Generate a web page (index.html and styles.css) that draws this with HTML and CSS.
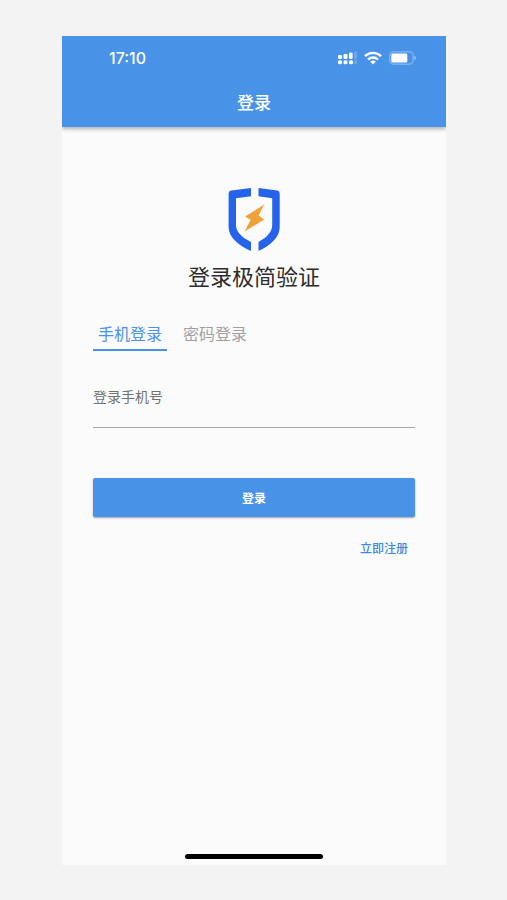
FILE: index.html
```html
<!DOCTYPE html>
<html lang="zh-CN">
<head>
  <meta charset="utf-8">
  <meta name="viewport" content="width=device-width, initial-scale=1">
  <title>登录</title>
  <link rel="stylesheet" href="styles.css">
</head>
<body>
  <div class="phone">
    <header class="app-bar">
      <div class="status">
        <span class="status-time">17:10</span>
        <div class="status-icons">
          <svg width="20" height="14" viewBox="0 0 20 14" fill="#fff" aria-hidden="true">
            <rect x="1" y="4" width="4" height="4" rx="1.200"/>
            <rect x="6.500" y="3" width="4" height="5" rx="1.200"/>
            <rect x="12" y="1.500" width="3.600" height="6.500" rx="1.200"/>
            <rect x="1" y="9.300" width="4" height="4" rx="1.500"/>
            <rect x="6.500" y="9.300" width="4" height="4" rx="1.500"/>
            <rect x="12" y="9.300" width="4" height="4" rx="1.500"/>
            <g opacity=".22">
              <rect x="17.200" y="0.500" width="2.600" height="7.500" rx="1.200"/>
              <rect x="17.200" y="9.300" width="2.600" height="4" rx="1.200"/>
            </g>
          </svg>
          <svg width="18" height="14" viewBox="0 0 18 14" fill="none" stroke="#fff" stroke-width="2.4" aria-hidden="true">
            <path d="M1 5.2C5.4 .8 12.6 .8 17 5.2"/>
            <path d="M4 8.5C6.8 5.8 11.2 5.8 14 8.5"/>
            <path d="M9 13.5 6.2 10.600Q9 8.400 11.800 10.600Z" fill="#fff" stroke="none"/>
          </svg>
          <svg width="28" height="14" viewBox="0 0 28 14" aria-hidden="true">
            <rect x=".7" y=".9" width="23.4" height="12.2" rx="3.6" fill="none" stroke="#fff" stroke-opacity=".35" stroke-width="1.2"/>
            <rect x="2.3" y="2.5" width="16" height="9" rx="1.500" fill="#fff"/>
            <path d="M25.3 4.8Q27.3 5.6 27.3 7T25.3 9.2Z" fill="#fff" opacity=".4"/>
          </svg>
        </div>
      </div>
      <h1 class="app-title">登录</h1>
    </header>

    <main class="content">
      <svg class="logo" width="52" height="64" viewBox="0 0 52 64" aria-hidden="true">
        <path d="M23 1 3 3.6Q.6 4 .6 6.4V40C.6 50 10 58 23 64V55C13 50 8 44.500 8 38V11.200L23 9.200Z" fill="#2563eb"/>
        <path d="M30.500 1 49.300 3.600Q51.700 4 51.700 6.400V40C51.700 50 43 58 30.500 64V55C39.500 50 44.200 44.500 44.200 38V11.200L30.500 9.200Z" fill="#2563eb"/>
        <path d="M36.200 17.500 17.200 29.400 22.600 33 16.600 44.600 36.400 32.400 30.600 28.400Z" fill="#f0a23a"/>
      </svg>
      <h2 class="product">登录极简验证</h2>

      <nav class="tabs" aria-label="登录方式">
        <button type="button" class="tab tab-active">手机登录</button>
        <button type="button" class="tab">密码登录</button>
      </nav>

      <form class="form">
        <input class="field" type="tel" placeholder="登录手机号" aria-label="登录手机号">
        <button type="submit" class="submit">登录</button>
        <a class="register" href="#">立即注册</a>
      </form>
    </main>

    <div class="home-bar"></div>
  </div>
</body>
</html>
```
FILE: styles.css
```css
* {
  box-sizing: border-box;
}

body {
  display: flex;
  min-height: 100vh;
  margin: 0;
  padding: 36px 61px 35px 62px;
  background: #f3f3f3;
  color: #2b2b2b;
  font-family: "Liberation Sans", "Noto Sans CJK SC", sans-serif;
}

button,
input {
  margin: 0;
  border: 0;
  padding: 0;
  border-radius: 0;
  background: none;
  font: inherit;
}

.phone {
  display: flex;
  flex: 1;
  flex-direction: column;
  min-width: 0;
  background: #fbfbfb;
}

.app-bar {
  background: #4892e8;
  color: #fff;
  box-shadow: 0 2px 4px rgba(0, 0, 0, 0.3);
  clip-path: inset(0 0 -8px 0);
}

.status {
  display: flex;
  align-items: center;
  justify-content: space-between;
  height: 44px;
  padding: 0 29px 0 47px;
}

.status-time {
  font-family: Inter, "Liberation Sans", sans-serif;
  font-size: 16px;
  font-weight: 500;
}

.status-icons {
  display: flex;
  align-items: center;
  gap: 7px;
}

.app-title {
  margin: 0;
  padding: 11px 0 10px;
  font-size: 17px;
  font-weight: 500;
  line-height: 26px;
  text-align: center;
}

.content {
  display: flex;
  flex: 1;
  flex-direction: column;
  padding: 60px 31px 0;
}

.logo {
  align-self: center;
}

.product {
  margin: 11px 0 0;
  font-size: 22px;
  font-weight: 400;
  line-height: 32px;
  text-align: center;
}

.tabs {
  display: flex;
  gap: 10px;
  margin-top: 24px;
}

.tab {
  padding: 5px 5px 2px;
  border-bottom: 2px solid transparent;
  color: #a0a0a0;
  font-size: 16px;
  line-height: 24px;
}

.tab + .tab {
  padding-left: 6px;
}

.tab-active {
  border-bottom-color: #4892e8;
  color: #4892e8;
}

.form {
  display: flex;
  flex-direction: column;
  margin-top: 16px;
}

.field {
  width: 100%;
  height: 61px;
  border-bottom: 1px solid #a8a8a8;
  color: #2b2b2b;
  font-size: 14px;
}

.field::placeholder {
  color: #707070;
  opacity: 1;
}

.submit {
  height: 39px;
  margin-top: 50px;
  border-radius: 2px;
  background: #4892e8;
  box-shadow: 0 1px 2px rgba(0, 0, 0, 0.35);
  color: #fff;
  font-size: 12px;
  font-weight: 700;
}

.register {
  align-self: flex-end;
  margin: 22px 7px 0 0;
  color: #4088d8;
  font-size: 12px;
  font-weight: 500;
  line-height: 20px;
  text-decoration: none;
}

.home-bar {
  align-self: center;
  width: 36%;
  height: 5px;
  margin-bottom: 6px;
  border-radius: 3px;
  background: #000;
}
```
